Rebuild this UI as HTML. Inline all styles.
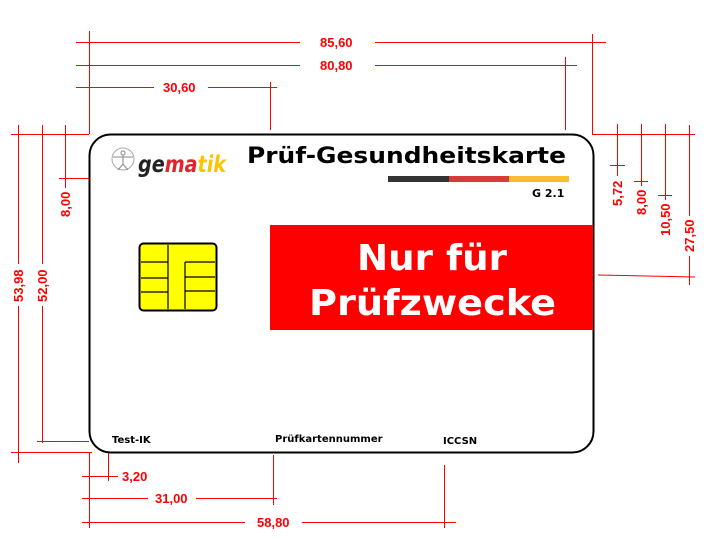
<!DOCTYPE html>
<html><head><meta charset="utf-8"><style>
html,body{margin:0;padding:0;background:#fff;}
svg{display:block}
text{font-family:"DejaVu Sans","Liberation Sans",sans-serif;}
.r{fill:#f00;font-family:"Liberation Sans",sans-serif;font-weight:bold;font-size:13px;}
</style></head><body>
<svg width="710" height="538" viewBox="0 0 710 538" xmlns="http://www.w3.org/2000/svg">
<g stroke="#f00" stroke-width="1" fill="none">
<line x1="76" y1="42.5" x2="300" y2="42.5"/><line x1="375" y1="42.5" x2="606" y2="42.5"/>
<line x1="76" y1="65.5" x2="300" y2="65.5"/><line x1="375" y1="65.5" x2="577" y2="65.5"/>
<line x1="76" y1="87.5" x2="154" y2="87.5"/><line x1="208" y1="87.5" x2="277" y2="87.5"/>
<line x1="89.5" y1="31" x2="89.5" y2="134"/>
<line x1="270.5" y1="82" x2="270.5" y2="130"/>
<line x1="565.5" y1="57" x2="565.5" y2="130"/>
<line x1="592.5" y1="34" x2="592.5" y2="134"/>
<line x1="11" y1="134.5" x2="89" y2="134.5"/>
<line x1="18.5" y1="125" x2="18.5" y2="264"/><line x1="18.5" y1="306" x2="18.5" y2="463"/>
<line x1="42.5" y1="125" x2="42.5" y2="264"/><line x1="42.5" y1="306" x2="42.5" y2="443"/>
<line x1="65.5" y1="125" x2="65.5" y2="188"/>
<line x1="59" y1="178.5" x2="89" y2="178.5"/>
<line x1="11" y1="452.5" x2="92" y2="452.5"/>
<line x1="37" y1="441.5" x2="89" y2="441.5"/>
<line x1="592" y1="134.5" x2="695" y2="134.5"/>
<line x1="617.5" y1="124" x2="617.5" y2="176"/><line x1="610" y1="165.5" x2="625" y2="165.5"/>
<line x1="641.5" y1="124" x2="641.5" y2="186"/><line x1="634" y1="181.5" x2="648" y2="181.5"/>
<line x1="665.5" y1="124" x2="665.5" y2="200"/><line x1="658" y1="195.5" x2="672" y2="195.5"/>
<line x1="689.5" y1="125" x2="689.5" y2="216"/><line x1="689.5" y1="256" x2="689.5" y2="285"/>
<line x1="598" y1="275" x2="695" y2="277"/>
<line x1="89.5" y1="452" x2="89.5" y2="528"/>
<line x1="108.5" y1="453" x2="108.5" y2="481"/><line x1="82" y1="476.5" x2="118" y2="476.5"/>
<line x1="82" y1="498.5" x2="148" y2="498.5"/><line x1="196" y1="498.5" x2="277" y2="498.5"/>
<line x1="273.5" y1="455" x2="273.5" y2="505"/>
<line x1="82" y1="522.5" x2="245" y2="522.5"/><line x1="302" y1="522.5" x2="456" y2="522.5"/>
<line x1="444.5" y1="465" x2="444.5" y2="528"/>
</g>
<text class="r" x="320" y="47">85,60</text>
<text class="r" x="320" y="70">80,80</text>
<text class="r" x="163" y="92">30,60</text>
<text class="r" x="122" y="481">3,20</text>
<text class="r" x="155" y="503">31,00</text>
<text class="r" x="257" y="527">58,80</text>
<text class="r" transform="translate(23,302) rotate(-90)">53,98</text>
<text class="r" transform="translate(47,302) rotate(-90)">52,00</text>
<text class="r" transform="translate(70,217) rotate(-90)">8,00</text>
<text class="r" transform="translate(622,206) rotate(-90)">5,72</text>
<text class="r" transform="translate(646,215) rotate(-90)">8,00</text>
<text class="r" transform="translate(670,236) rotate(-90)">10,50</text>
<text class="r" transform="translate(694,252) rotate(-90)">27,50</text>
<rect x="89.5" y="134.5" width="504" height="318" rx="21" fill="#fff" stroke="#000" stroke-width="2"/>
<circle cx="123" cy="159" r="11" fill="none" stroke="#aaa" stroke-width="1"/>
<g stroke="#888" stroke-width="1" fill="none"><circle cx="123" cy="153" r="2"/><line x1="123" y1="155" x2="123" y2="164"/><line x1="113" y1="157" x2="133" y2="157"/><line x1="123" y1="164" x2="118" y2="170"/><line x1="123" y1="164" x2="128" y2="170"/></g>
<text x="138" y="172" font-family="Liberation Sans,sans-serif" font-style="italic" font-weight="bold" font-size="23" textLength="88" lengthAdjust="spacingAndGlyphs"><tspan fill="#222">ge</tspan><tspan fill="#e3222c">ma</tspan><tspan fill="#fbc400">tik</tspan></text>
<text x="247" y="163" font-weight="bold" font-size="22" fill="#000" textLength="319" lengthAdjust="spacingAndGlyphs">Prüf-Gesundheitskarte</text>
<rect x="388" y="176" width="61" height="6" fill="#333"/>
<rect x="449" y="176" width="60" height="6" fill="#d93a3a"/>
<rect x="509" y="176" width="60" height="6" fill="#f5be35"/>
<text x="532" y="197" font-weight="bold" font-size="11">G 2.1</text>
<g stroke="#000" stroke-width="1.2" fill="none">
<rect x="139.5" y="243.5" width="77" height="67" rx="4" fill="#ff0" stroke-width="2"/>
<line x1="168" y1="245" x2="168" y2="309"/>
<line x1="185" y1="262" x2="185" y2="309"/>
<line x1="185" y1="262" x2="215" y2="262"/>
<line x1="141" y1="262" x2="168" y2="262"/>
<line x1="141" y1="278" x2="168" y2="278"/>
<line x1="141" y1="292" x2="168" y2="292"/>
<line x1="185" y1="277" x2="215" y2="277"/>
<line x1="185" y1="291" x2="215" y2="291"/>
</g>
<rect x="270" y="225" width="323" height="105" fill="#f00"/>
<text x="357" y="270" fill="#fff" font-weight="bold" font-size="36" textLength="150" lengthAdjust="spacingAndGlyphs">Nur für</text>
<text x="309" y="315" fill="#fff" font-weight="bold" font-size="36" textLength="247" lengthAdjust="spacingAndGlyphs">Prüfzwecke</text>
<text x="112" y="443" font-weight="bold" font-size="10">Test-IK</text>
<text x="275" y="442" font-weight="bold" font-size="10">Prüfkartennummer</text>
<text x="443" y="444" font-weight="bold" font-size="10">ICCSN</text>
</svg>
</body></html>
